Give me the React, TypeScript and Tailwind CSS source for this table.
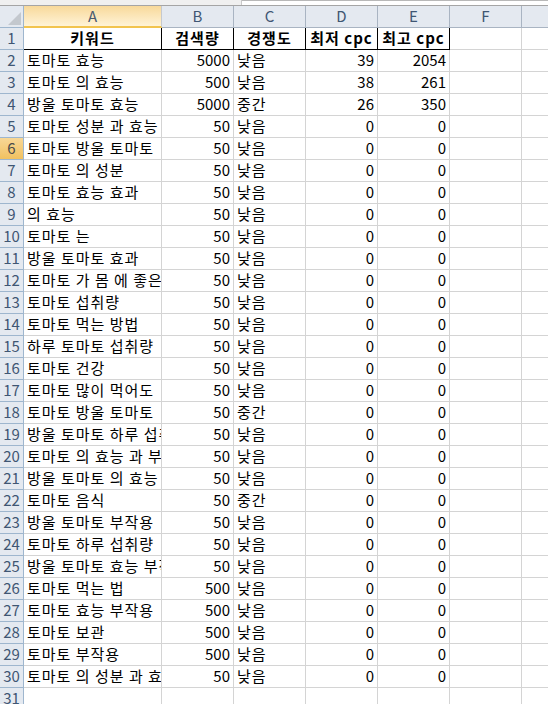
import React from "react";

type Row = [string, number, string, number, number];

const data: Row[] = [
  ["토마토 효능", 5000, "낮음", 39, 2054],
  ["토마토 의 효능", 500, "낮음", 38, 261],
  ["방울 토마토 효능", 5000, "중간", 26, 350],
  ["토마토 성분 과 효능", 50, "낮음", 0, 0],
  ["토마토 방울 토마토", 50, "낮음", 0, 0],
  ["토마토 의 성분", 50, "낮음", 0, 0],
  ["토마토 효능 효과", 50, "낮음", 0, 0],
  ["의 효능", 50, "낮음", 0, 0],
  ["토마토 는", 50, "낮음", 0, 0],
  ["방울 토마토 효과", 50, "낮음", 0, 0],
  ["토마토 가 몸 에 좋은", 50, "낮음", 0, 0],
  ["토마토 섭취량", 50, "낮음", 0, 0],
  ["토마토 먹는 방법", 50, "낮음", 0, 0],
  ["하루 토마토 섭취량", 50, "낮음", 0, 0],
  ["토마토 건강", 50, "낮음", 0, 0],
  ["토마토 많이 먹어도", 50, "낮음", 0, 0],
  ["토마토 방울 토마토", 50, "중간", 0, 0],
  ["방울 토마토 하루 섭취량", 50, "낮음", 0, 0],
  ["토마토 의 효능 과 부작용", 50, "낮음", 0, 0],
  ["방울 토마토 의 효능", 50, "낮음", 0, 0],
  ["토마토 음식", 50, "중간", 0, 0],
  ["방울 토마토 부작용", 50, "낮음", 0, 0],
  ["토마토 하루 섭취량", 50, "낮음", 0, 0],
  ["방울 토마토 효능 부작용", 50, "낮음", 0, 0],
  ["토마토 먹는 법", 500, "낮음", 0, 0],
  ["토마토 효능 부작용", 500, "낮음", 0, 0],
  ["토마토 보관", 500, "낮음", 0, 0],
  ["토마토 부작용", 500, "낮음", 0, 0],
  ["토마토 의 성분 과 효능", 50, "낮음", 0, 0],
];

const font = { fontFamily: '"Noto Sans CJK KR", "Noto Sans", sans-serif' };

function RowHead({ n, active }: { n: number | string; active?: boolean }) {
  return (
    <div
      className={
        "w-[24px] shrink-0 h-full flex items-center justify-center border-r border-b border-[#9eb6ce] text-[15px] font-normal " +
        (active
          ? "bg-gradient-to-b from-[#f8d796] to-[#f1c15f] text-[#4a4a4a]"
          : "bg-[#e4e9f0] text-[#3f5673]")
      }
    >
      {n}
    </div>
  );
}

const cell = "shrink-0 h-full border-r border-b border-[#d4d4d4] overflow-hidden whitespace-nowrap flex items-center";
const hcell = "w-[72px] shrink-0 h-full flex items-center justify-center border-r border-b border-black whitespace-nowrap tracking-[1px]";

export default function App() {
  return (
    <div className="w-[548px] h-[704px] overflow-hidden bg-white text-black" style={font}>
      {/* top strip */}
      <div className="h-[6px] bg-[#f0f0f0] border-b border-[#a5a5a5] flex">
        <div className="w-[242px] h-full border-r border-[#c9c9c9]"></div>
        <div className="flex-1 border-t border-[#b8b8b8] bg-white"></div>
      </div>
      {/* column header row */}
      <div className="flex h-[22px] text-[15px]">
        <div className="w-[24px] shrink-0 h-full bg-[#e4e9f0] border-r border-b border-[#9eb6ce] relative">
          <div
            className="absolute right-[2px] bottom-[2px] w-0 h-0"
            style={{ borderLeft: "13px solid transparent", borderBottom: "13px solid #c3c8ce" }}
          ></div>
        </div>
        <div className="w-[138px] shrink-0 h-full flex items-center justify-center border-r border-[#c5c9cf] border-b-2 border-b-[#f2c44e] bg-gradient-to-b from-[#f8d99a] to-[#fff3d6] text-[#4a5a70]">
          A
        </div>
        {["B", "C", "D", "E", "F"].map((c) => (
          <div
            key={c}
            className="w-[72px] shrink-0 h-full flex items-center justify-center border-r border-b border-[#a9b4c2] bg-[#e4e9f0] text-[#3f5673]"
          >
            {c}
          </div>
        ))}
        <div className="flex-1 h-full border-b border-[#a9b4c2] bg-[#e4e9f0]"></div>
      </div>
      {/* row 1 */}
      <div className="flex h-[22px] text-[15px]">
        <RowHead n={1} />
        <div className="w-[138px] shrink-0 h-full flex items-center justify-center border-r border-b border-black font-bold tracking-[1px]">키워드</div>
        <div className={hcell + " font-bold"}>검색량</div>
        <div className={hcell + " font-bold"}>경쟁도</div>
        <div className={hcell + " font-bold"}>최저 cpc</div>
        <div className={hcell + " font-bold"}>최고 cpc</div>
        <div className={cell + " w-[72px]"}></div>
        <div className="flex-1 h-full border-b border-[#d4d4d4]"></div>
      </div>
      {data.map((r, i) => (
        <div key={i} className="flex h-[22px] text-[15px]">
          <RowHead n={i + 2} active={i + 2 === 6} />
          <div className={cell + " w-[138px] pl-[3px] tracking-[1px]"}>{r[0]}</div>
          <div className={cell + " w-[72px] justify-end pr-[3px]"}>{r[1]}</div>
          <div className={cell + " w-[72px] pl-[3px] tracking-[1px]"}>{r[2]}</div>
          <div className={cell + " w-[72px] justify-end pr-[3px]"}>{r[3]}</div>
          <div className={cell + " w-[72px] justify-end pr-[3px]"}>{r[4]}</div>
          <div className={cell + " w-[72px]"}></div>
          <div className="flex-1 h-full border-b border-[#d4d4d4]"></div>
        </div>
      ))}
      <div className="flex h-[22px] text-[15px]">
        <RowHead n={31} />
        <div className={cell + " w-[138px]"}></div>
        <div className={cell + " w-[72px]"}></div>
        <div className={cell + " w-[72px]"}></div>
        <div className={cell + " w-[72px]"}></div>
        <div className={cell + " w-[72px]"}></div>
        <div className={cell + " w-[72px]"}></div>
        <div className="flex-1 h-full border-b border-[#d4d4d4]"></div>
      </div>
    </div>
  );
}
